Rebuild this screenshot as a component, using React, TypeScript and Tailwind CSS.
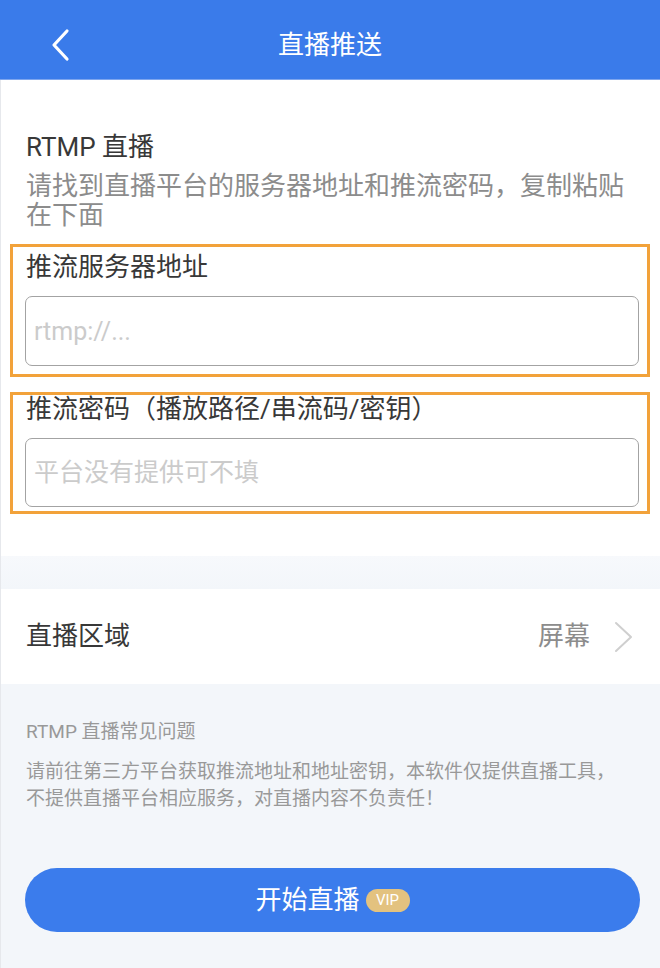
import React from "react";

const font = { fontFamily: 'Roboto, "Noto Sans CJK SC", "Noto Sans", sans-serif' };

export default function App() {
  return (
    <div className="w-[660px] h-[968px] bg-[#f3f6fa] overflow-hidden flex flex-col" style={font}>
      {/* Header */}
      <div className="h-[80px] bg-[#3a7bea] grid grid-cols-[1fr_auto_1fr] items-center pt-[10px] shrink-0 border-b border-[#7fa6ee]">
        <div className="pl-[50px] flex items-center">
          <svg width="22" height="34" viewBox="0 0 22 34" fill="none">
            <polyline points="17,3 4,17 17,31" stroke="#ffffff" strokeWidth="3.2" strokeLinecap="round" strokeLinejoin="round" />
          </svg>
        </div>
        <div className="text-white text-[26px] leading-[34px]">直播推送</div>
        <div />
      </div>

      <div className="flex-1 flex flex-col border-l border-[#e6e8ec]">
        {/* White section */}
        <div className="bg-white pt-[50px] pb-[42px]">
          <div className="pl-[25px] text-[26px] leading-[34px] text-[#383838]">RTMP 直播</div>
          <div className="pl-[25px] mt-[8px] text-[26px] leading-[29px] text-[#8c8c8c]">
            请找到直播平台的服务器地址和推流密码，复制粘贴
            <br />
            在下面
          </div>

          <div className="mt-[14px] ml-[9px] mr-[10px] border-[3px] border-[#f2a23a] pl-[12px] pr-[8px] pt-[3px] pb-[8px]">
            <div className="pl-[1px] text-[26px] leading-[34px] text-[#383838]">推流服务器地址</div>
            <input
              readOnly
              placeholder="rtmp://..."
              className="mt-[12px] w-full h-[70px] border border-[#a3a3a3] rounded-[7px] pl-[8px] text-[25px] text-[#333] placeholder:text-[#cbcbcb] outline-none bg-white"
              style={font}
            />
          </div>

          <div className="mt-[15px] ml-[9px] mr-[10px] border-[3px] border-[#f2a23a] pl-[12px] pr-[8px] pb-[4px]">
            <div className="pl-[1px] text-[26px] leading-[28px] text-[#383838]">推流密码（播放路径/串流码/密钥）</div>
            <input
              readOnly
              placeholder="平台没有提供可不填"
              className="mt-[15px] w-full h-[69px] border border-[#a3a3a3] rounded-[7px] pl-[8px] text-[25px] text-[#333] placeholder:text-[#cbcbcb] outline-none bg-white"
              style={font}
            />
          </div>
        </div>

        {/* Gray band */}
        <div className="h-[33px] bg-gradient-to-b from-[#f7f9fc] to-[#f3f6fa]" />

        {/* Row */}
        <div className="h-[95px] bg-white flex items-center justify-between pl-[25px] pr-[27px]">
          <div className="text-[26px] text-[#383838]">直播区域</div>
          <div className="flex items-center gap-[24px]">
            <span className="text-[26px] text-[#8c8c8c]">屏幕</span>
            <svg width="19" height="32" viewBox="0 0 19 32" fill="none">
              <polyline points="2,2 17,16 2,30" stroke="#cfcfcf" strokeWidth="2" strokeLinecap="round" strokeLinejoin="round" />
            </svg>
          </div>
        </div>

        {/* FAQ */}
        <div className="flex flex-col pt-[35px]">
          <div className="pl-[25px] text-[19px] leading-[26px] text-[#999999]">RTMP 直播常见问题</div>
          <div className="pl-[25px] mt-[13px] text-[19px] leading-[27px] text-[#999999]">
            请前往第三方平台获取推流地址和地址密钥，本软件仅提供直播工具，
            <br />
            不提供直播平台相应服务，对直播内容不负责任！
          </div>

          <button className="mt-[56px] ml-[24px] w-[615px] h-[64px] rounded-full bg-[#3b7cec] flex items-center justify-center gap-[6px]">
            <span className="text-white text-[26px] leading-[34px]">开始直播</span>
            <span className="w-[44px] h-[23px] rounded-full bg-[#e3c27f] text-white text-[15px] leading-[23px] flex items-center justify-center">VIP</span>
          </button>
        </div>
      </div>
    </div>
  );
}
